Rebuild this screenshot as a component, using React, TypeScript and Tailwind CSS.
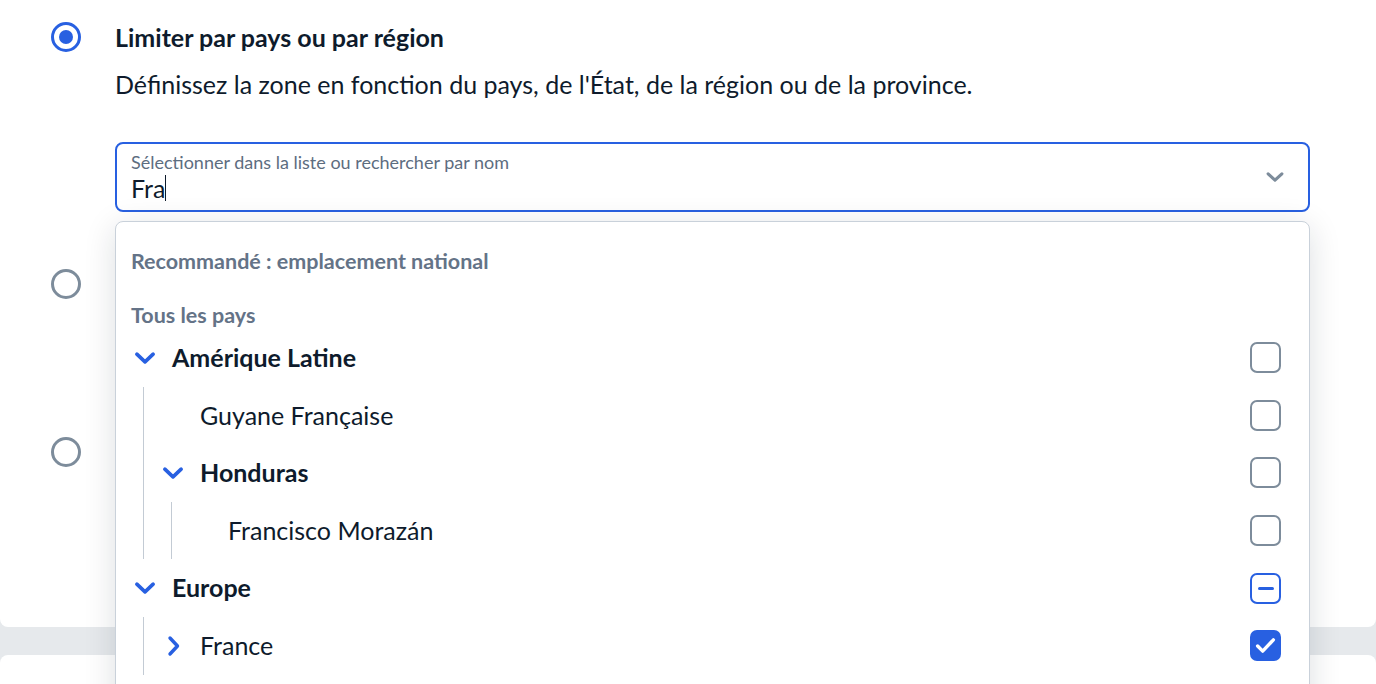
import React from "react";

type Node = {
  label: string;
  bold?: boolean;
  open?: boolean;
  state?: "none" | "some" | "all";
  children?: Node[];
};

const tree: Node[] = [
  {
    label: "Amérique Latine",
    bold: true,
    open: true,
    children: [
      {label: "Guyane Française"},
      {
        label: "Honduras",
        bold: true,
        open: true,
        children: [{label: "Francisco Morazán"}],
      },
    ],
  },
  {
    label: "Europe",
    bold: true,
    open: true,
    state: "some",
    children: [{label: "France", open: false, state: "all", children: []}],
  },
];

function ChevronDown({className}: {className?: string}) {
  return (
    <svg viewBox="0 0 24 24" className={className} fill="none">
      <path d="M4.5 8.5l7.5 7 7.5-7" stroke="currentColor" strokeWidth="3.4" strokeLinecap="round" strokeLinejoin="round" />
    </svg>
  );
}

function ChevronRight({className}: {className?: string}) {
  return (
    <svg viewBox="0 0 24 24" className={className} fill="none">
      <path d="M9 4l7.5 8L9 20" stroke="currentColor" strokeWidth="3.4" strokeLinecap="round" strokeLinejoin="round" />
    </svg>
  );
}

function Checkbox({state = "none"}: {state?: "none" | "some" | "all"}) {
  if (state === "all") {
    return (
      <span className="w-[31px] h-[31px] rounded-[7px] bg-[#2860e1] flex items-center justify-center">
        <svg viewBox="0 0 24 24" className="w-[27px] h-[27px]" fill="none">
          <path d="M5 12.5l4.5 4.5L19 7" stroke="white" strokeWidth="3" strokeLinecap="round" strokeLinejoin="round" />
        </svg>
      </span>
    );
  }
  if (state === "some") {
    return (
      <span className="w-[31px] h-[31px] rounded-[7px] border-[2.5px] border-[#2860e1] bg-white flex items-center justify-center">
        <span className="w-[16px] h-[3px] rounded-full bg-[#2860e1]" />
      </span>
    );
  }
  return <span className="w-[31px] h-[31px] rounded-[7px] border-[2.5px] border-[#7d8c9b] bg-white" />;
}

function TreeRow({node}: {node: Node}) {
  const hasKids = node.children !== undefined;
  return (
    <div>
      <div className="h-[57.6px] flex items-center pr-[28px]">
        <span className="w-[28px] h-[28px] flex items-center justify-center text-[#2860e1] shrink-0">
          {hasKids && (node.open ? <ChevronDown className="w-[26px] h-[26px]" /> : <ChevronRight className="w-[24px] h-[24px]" />)}
        </span>
        <span className={`ml-[13px] flex-1 text-[25px] text-[#0e1b2c] ${node.bold ? "font-bold" : "font-normal"}`}>
          {node.label}
        </span>
        <Checkbox state={node.state} />
      </div>
      {node.open && node.children && node.children.length > 0 && (
        <div className="ml-[12px] border-l border-[#c3cbd4] pl-[15px]">
          {node.children.map((c) => (
            <TreeRow key={c.label} node={c} />
          ))}
        </div>
      )}
    </div>
  );
}

function Radio({checked}: {checked?: boolean}) {
  return checked ? (
    <span className="w-[30px] h-[30px] rounded-full border-[3px] border-[#2860e1] flex items-center justify-center shrink-0">
      <span className="w-[14px] h-[14px] rounded-full bg-[#2860e1]" />
    </span>
  ) : (
    <span className="w-[30px] h-[30px] rounded-full border-[3px] border-[#7d8c9b] shrink-0" />
  );
}

export default function App() {
  return (
    <div className="min-h-screen bg-[#e6e9ec] font-['Lato',sans-serif] overflow-hidden">
      <div className="bg-white h-[627px] rounded-b-lg pt-[22px] pl-[51px] pr-[66px]">
        {/* Option 1 */}
        <div className="flex gap-[34px]">
          <Radio checked />
          <div className="flex-1 relative">
            <h3 className="text-[25px] leading-[30px] font-bold text-[#0e1b2c]">Limiter par pays ou par région</h3>
            <p className="mt-[17px] text-[25px] leading-[30px] text-[#0e1b2c]">
              Définissez la zone en fonction du pays, de l'État, de la région ou de la province.
            </p>

            <div className="mt-[43px] h-[70px] rounded-lg border-2 border-[#2860e1] bg-white flex items-center pl-[14px] pr-[22px]">
              <div className="flex-1">
                <div className="text-[18px] leading-[20px] text-[#5d6d7f]">Sélectionner dans la liste ou rechercher par nom</div>
                <div className="mt-[2px] flex items-center text-[25px] leading-[28px] text-[#0e1b2c]">
                  Fra
                  <span className="w-px h-[26px] bg-[#0e1b2c]" />
                </div>
              </div>
              <ChevronDown className="w-[22px] h-[22px] text-[#7d8c9b]" />
            </div>

            {/* dropdown popover */}
            <div className="absolute left-0 right-0 top-[calc(100%+9px)] z-10 bg-white border border-[#c9d1da] rounded-lg shadow-[0_6px_32px_rgba(15,27,44,0.14)] pl-[15px] pt-[25px] pb-[40px]">
              <div className="text-[21.5px] leading-[28px] font-bold text-[#647387]">Recommandé : emplacement national</div>
              <div className="mt-[26px] text-[21.5px] leading-[28px] font-bold text-[#647387]">Tous les pays</div>
              {tree.map((n) => (
                <TreeRow key={n.label} node={n} />
              ))}
            </div>
          </div>
        </div>

        {/* Option 2 (its text sits under the open list) */}
        <div className="flex gap-[34px] mt-[57px]">
          <Radio />
          <div className="flex-1 h-[111px]" />
        </div>

        {/* Option 3 */}
        <div className="flex gap-[34px] mt-[57px]">
          <Radio />
          <div className="flex-1 h-[77px]" />
        </div>
      </div>

      <div className="bg-white h-[300px] mt-[28px] rounded-t-lg" />
    </div>
  );
}
